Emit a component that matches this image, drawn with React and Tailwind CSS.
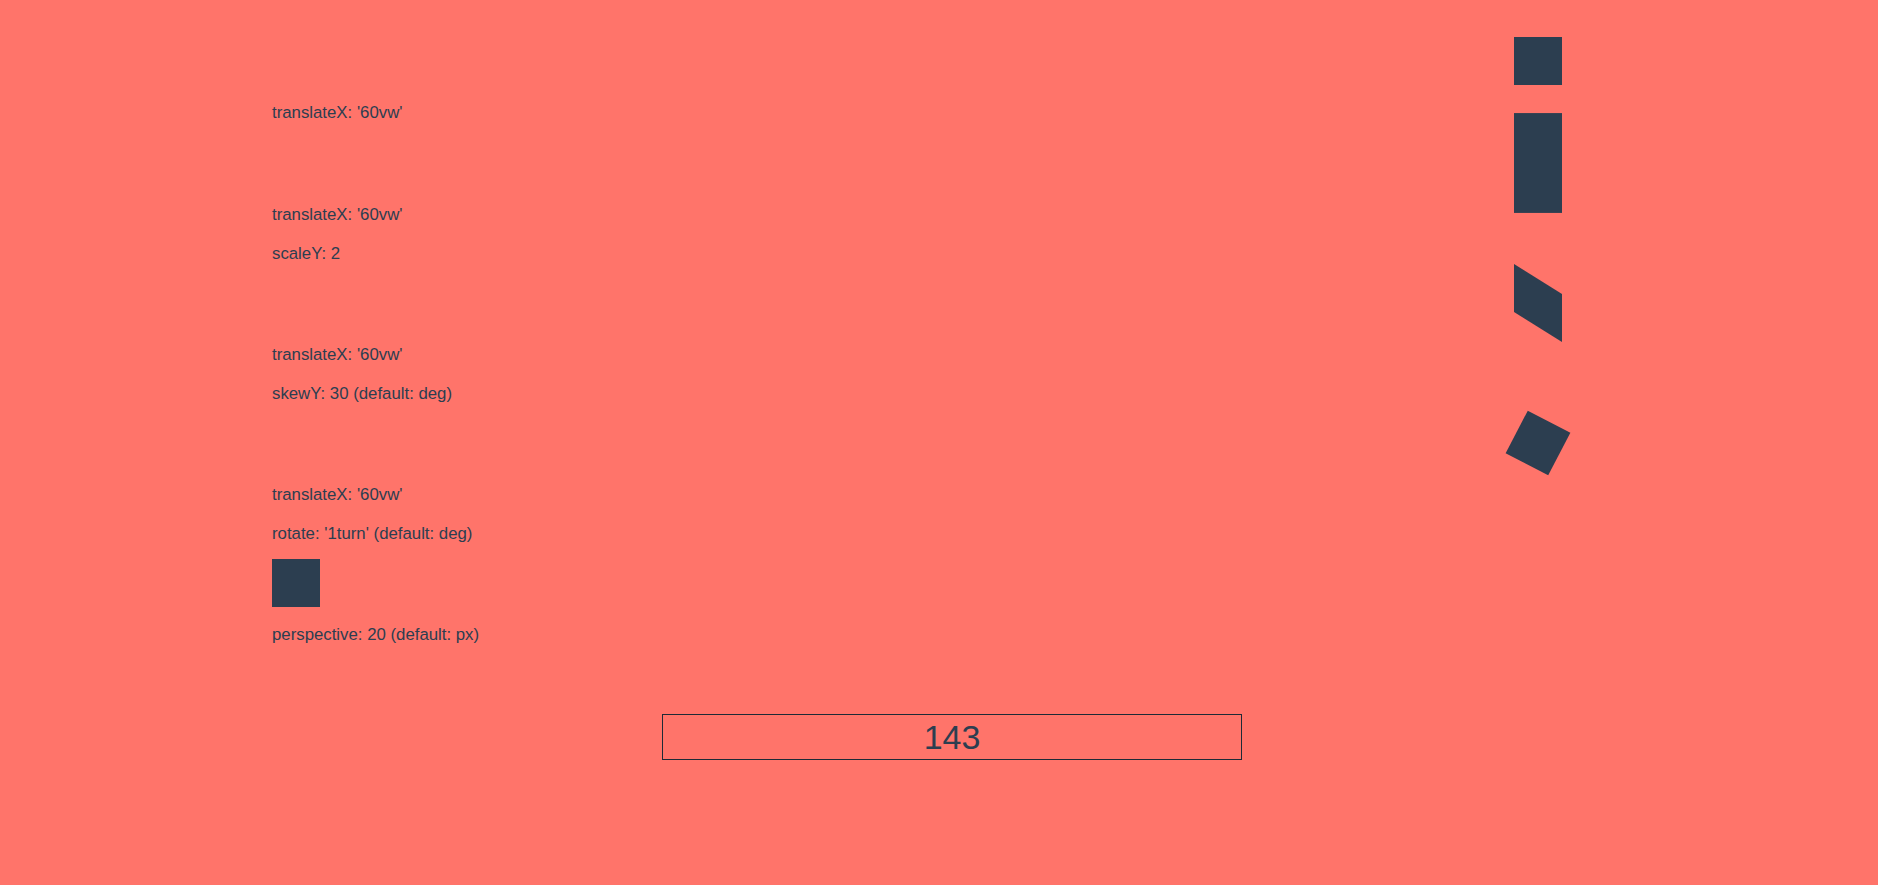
import React from "react";

function Row({ sq, labels, mb }) {
  return (
    <div className={mb}>
      <div className={sq}></div>
      <div className="mt-[8px]">
        {labels.map((l, i) => (
          <div key={i} className="h-[39px] leading-[39px] whitespace-nowrap">
            {l}
          </div>
        ))}
      </div>
    </div>
  );
}

export default function App() {
  return (
    <div
      className="min-h-screen w-full overflow-hidden bg-[#ff746a] text-[#2c3e50] text-[16.8px]"
      style={{ fontFamily: '"Liberation Sans", Arial, sans-serif' }}
    >
      <div className="flex flex-col pl-[272px] pt-[37px]">
        <Row
          mb="mb-[7px]"
          sq="w-12 h-12 bg-[#2c3e50] translate-x-[1242px]"
          labels={["translateX: '60vw'"]}
        />
        <Row
          mb="mb-[6px]"
          sq="w-12 h-12 bg-[#2c3e50] translate-x-[1242px] scale-y-[2.08]"
          labels={["translateX: '60vw'", "scaleY: 2"]}
        />
        <Row
          mb="mb-[6px]"
          sq="w-12 h-12 bg-[#2c3e50] translate-x-[1242px] skew-y-[32deg]"
          labels={["translateX: '60vw'", "skewY: 30 (default: deg)"]}
        />
        <Row
          mb="mb-[6px]"
          sq="w-12 h-12 bg-[#2c3e50] translate-x-[1242px] rotate-[27.5deg]"
          labels={["translateX: '60vw'", "rotate: '1turn' (default: deg)"]}
        />
        <Row
          mb="mb-[6px]"
          sq="w-12 h-12 bg-[#2c3e50]"
          labels={["perspective: 20 (default: px)"]}
        />
      </div>
      <div className="mt-[54px] ml-[662px] flex h-[46px] w-[580px] items-center justify-center border border-[#1e2a36] text-[34px] leading-[44px]">
        143
      </div>
    </div>
  );
}
